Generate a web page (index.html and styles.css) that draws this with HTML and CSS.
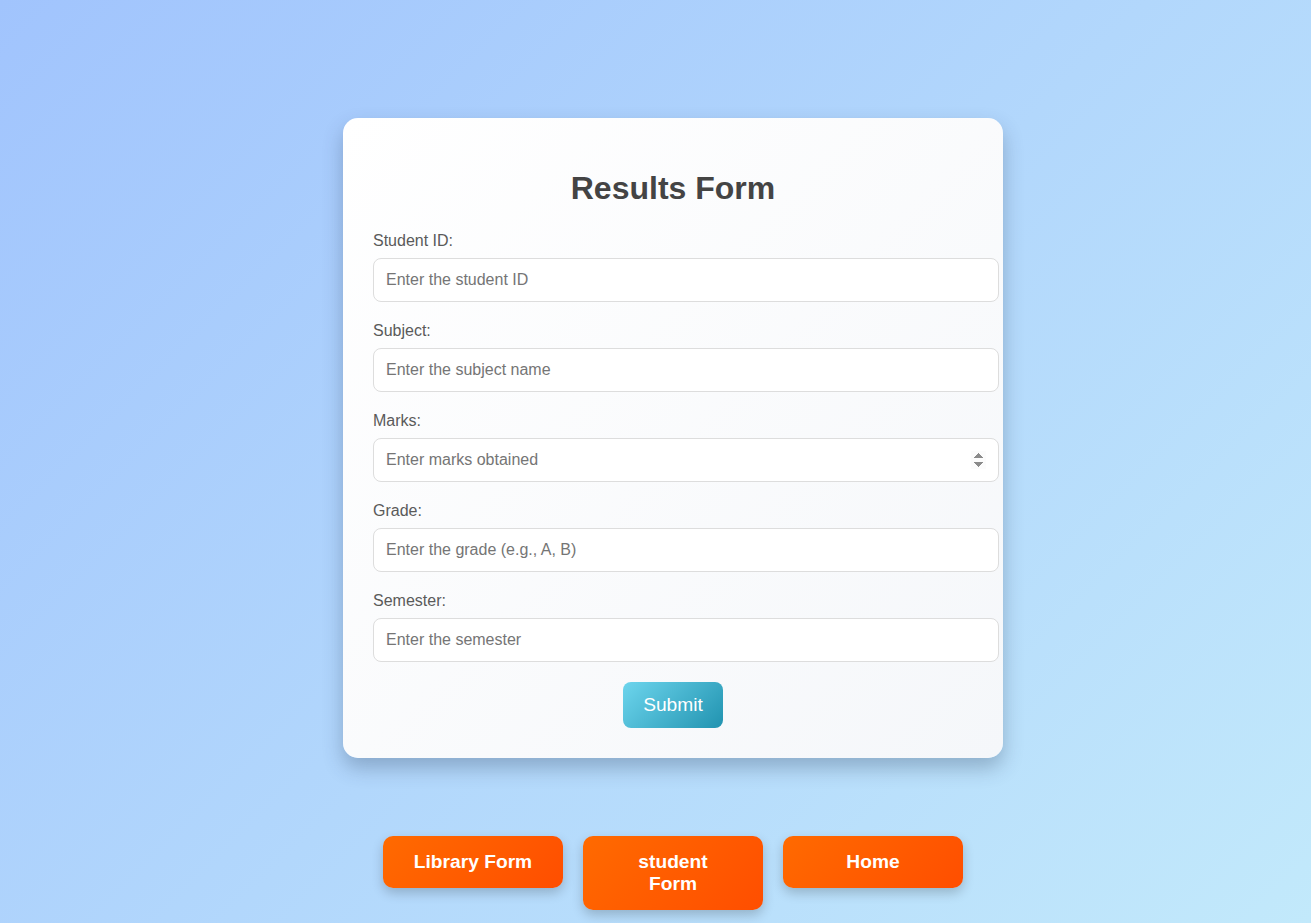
FILE: index.html
```html
<!DOCTYPE html>
<html lang="en">
<head>
<meta charset="UTF-8">
<title>Results Form</title>
<link rel="stylesheet" href="styles.css">
</head>
<body>
<main class="page">
  <form class="card">
    <h2 class="title">Results Form</h2>
    <label class="label" for="sid">Student ID:</label>
    <input class="field" id="sid" type="text" placeholder="Enter the student ID">
    <label class="label" for="subj">Subject:</label>
    <input class="field" id="subj" type="text" placeholder="Enter the subject name">
    <label class="label" for="marks">Marks:</label>
    <input class="field" id="marks" type="number" placeholder="Enter marks obtained">
    <label class="label" for="grade">Grade:</label>
    <input class="field" id="grade" type="text" placeholder="Enter the grade (e.g., A, B)">
    <label class="label" for="sem">Semester:</label>
    <input class="field" id="sem" type="text" placeholder="Enter the semester">
    <button class="submit" type="button">Submit</button>
  </form>
  <nav class="links">
    <a class="link-btn" href="#">Library Form</a>
    <a class="link-btn" href="#">student Form</a>
    <a class="link-btn" href="#">Home</a>
  </nav>
</main>
</body>
</html>
```
FILE: styles.css
```css
html, body {
  margin: 0;
  padding: 0;
}
body {
  min-height: 100vh;
  background: linear-gradient(135deg, #a1c4fd, #c2e9fb);
  font-family: "Liberation Sans", Arial, sans-serif;
}
.page {
  display: flex;
  flex-direction: column;
  align-items: center;
  padding: 118px 0 0 35px;
  gap: 78px;
}
.card {
  width: 600px;
  padding: 30px;
  background: linear-gradient(135deg, #ffffff, #f5f7fa);
  border-radius: 15px;
  box-shadow: 0 10px 20px rgba(40, 60, 90, 0.3);
}
.title {
  margin: 22px 0 25px;
  text-align: center;
  font-size: 32px;
  font-weight: bold;
  color: #444;
}
.label {
  display: block;
  margin-bottom: 8px;
  font-size: 16px;
  color: #5a5a5a;
}
.field {
  display: block;
  width: 100%;
  margin: 0 0 20px;
  padding: 12px;
  font-family: inherit;
  font-size: 16px;
  color: #333;
  background: #fff;
  border: 1px solid #ddd;
  border-radius: 8px;
  outline: none;
}
.field::placeholder {
  color: #757575;
}
.field::-webkit-inner-spin-button {
  opacity: 1;
}
.submit {
  display: block;
  margin: 0 auto;
  padding: 12px 20px;
  font-family: inherit;
  font-size: 1.2rem;
  color: #fff;
  background: linear-gradient(135deg, #6dd5ed, #2193b0);
  border: none;
  border-radius: 8px;
}
.links {
  display: flex;
  align-items: flex-start;
  gap: 20px;
}
.link-btn {
  box-sizing: border-box;
  width: 180px;
  padding: 15px 30px;
  text-align: center;
  font-size: 1.2rem;
  font-weight: bold;
  color: #fff;
  text-decoration: none;
  background: linear-gradient(135deg, #ff6a00, #ff4e00);
  border-radius: 10px;
  box-shadow: 0 5px 12px rgba(0, 0, 0, 0.2);
}
```
